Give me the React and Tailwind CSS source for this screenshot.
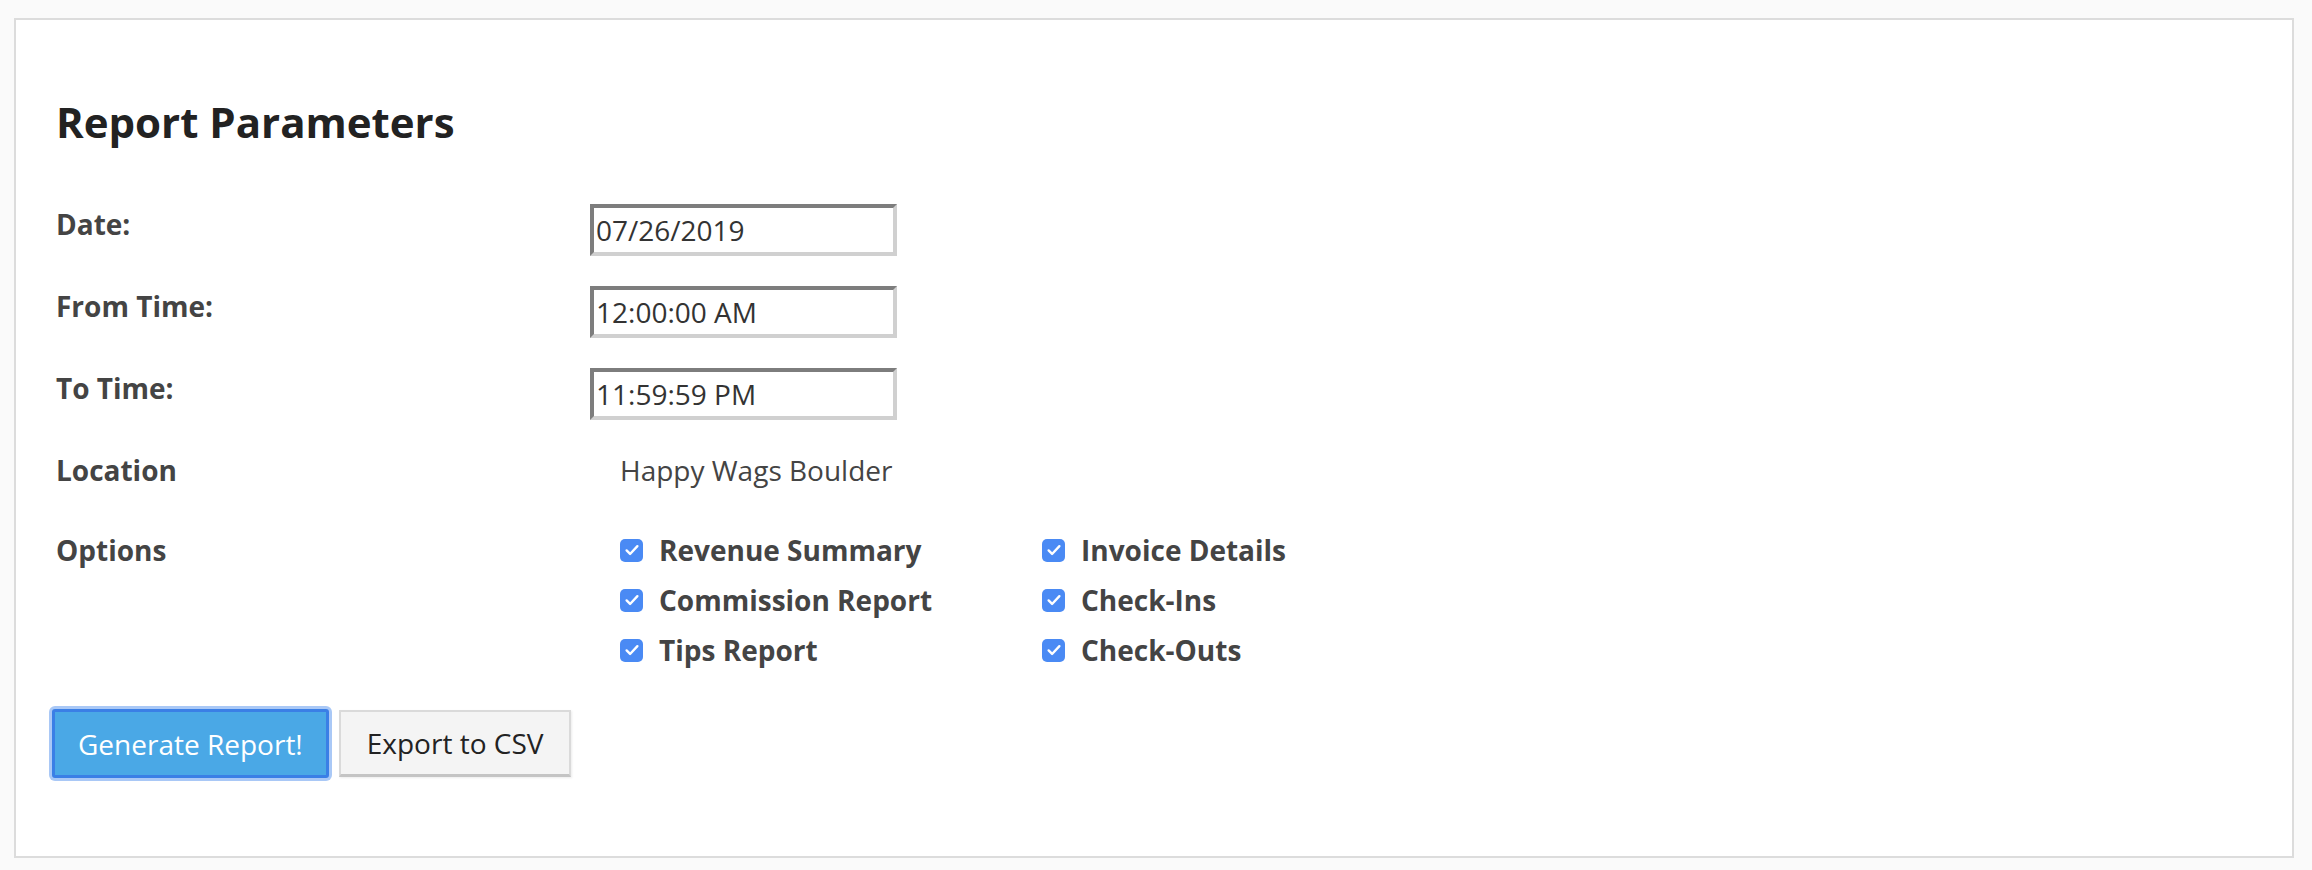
import React from 'react';

const fields = [
  { label: 'Date:', value: '07/26/2019' },
  { label: 'From Time:', value: '12:00:00 AM' },
  { label: 'To Time:', value: '11:59:59 PM' },
];

const options = [
  ['Revenue Summary', 'Invoice Details'],
  ['Commission Report', 'Check-Ins'],
  ['Tips Report', 'Check-Outs'],
];

const CheckBox = ({ label }) => (
  <label className="flex items-center h-[40px] cursor-pointer">
    <span className="w-[23px] h-[23px] rounded-[5px] bg-[#4a8af4] flex items-center justify-center shrink-0">
      <svg width="18" height="18" viewBox="0 0 16 16" fill="none">
        <path d="M3.2 8.4l3.1 3.1L12.8 4.6" stroke="white" strokeWidth="2.1" strokeLinecap="round" strokeLinejoin="round" />
      </svg>
    </span>
    <span className="ml-[16px] text-[28px] leading-[40px] font-bold text-[#444]">{label}</span>
  </label>
);

const App = () => {
  return (
    <div className="min-h-screen bg-[#fafafa] pt-[18px] pl-[14px] font-['Open_Sans',sans-serif]">
      <div className="w-[2280px] h-[840px] bg-white border-2 border-[#dcdcdc] pl-[40px] pt-[77px]">
        <h2 className="text-[42px] leading-[50px] font-bold text-[#222]">Report Parameters</h2>

        <div className="mt-[57px]">
          {fields.map((f) => (
            <div key={f.label} className="flex items-start h-[82px]">
              <div className="w-[534px] text-[28px] leading-[40px] font-bold text-[#444]">{f.label}</div>
              <input
                type="text"
                defaultValue={f.value}
                className="w-[307px] h-[52px] border-[4px] border-t-[#7d7d7d] border-l-[#7d7d7d] border-r-[#d0d0d0] border-b-[#d0d0d0] px-[2px] text-[28px] text-[#333] outline-none"
              />
            </div>
          ))}

          <div className="flex items-start h-[80px]">
            <div className="w-[534px] text-[28px] leading-[40px] font-bold text-[#444]">Location</div>
            <div className="pl-[30px] text-[28px] leading-[40px] text-[#444]">Happy Wags Boulder</div>
          </div>

          <div className="flex items-start">
            <div className="w-[534px] text-[28px] leading-[40px] font-bold text-[#444]">Options</div>
            <div className="pl-[30px] flex flex-col gap-[10px]">
              {options.map((row) => (
                <div key={row[0]} className="flex">
                  <div className="w-[422px]">
                    <CheckBox label={row[0]} />
                  </div>
                  <CheckBox label={row[1]} />
                </div>
              ))}
            </div>
          </div>
        </div>

        <div className="flex items-start gap-[10px] mt-[39px] -ml-[4px]">
          <button className="h-[69px] px-[23px] rounded-[3px] border-[3px] border-[#3a7fe6] bg-[#4aa8e6] ring-[3px] ring-[#a9c8f6] text-white text-[28px]">
            Generate Report!
          </button>
          <button className="h-[67px] mt-[1px] px-[26px] border-2 border-[#dadada] border-b-[3px] border-b-[#c4c4c4] bg-[#f4f4f4] text-[#222] text-[28px] shadow-[1px_1px_2px_rgba(0,0,0,0.08)]">
            Export to CSV
          </button>
        </div>
      </div>
    </div>
  );
};

export default App;
